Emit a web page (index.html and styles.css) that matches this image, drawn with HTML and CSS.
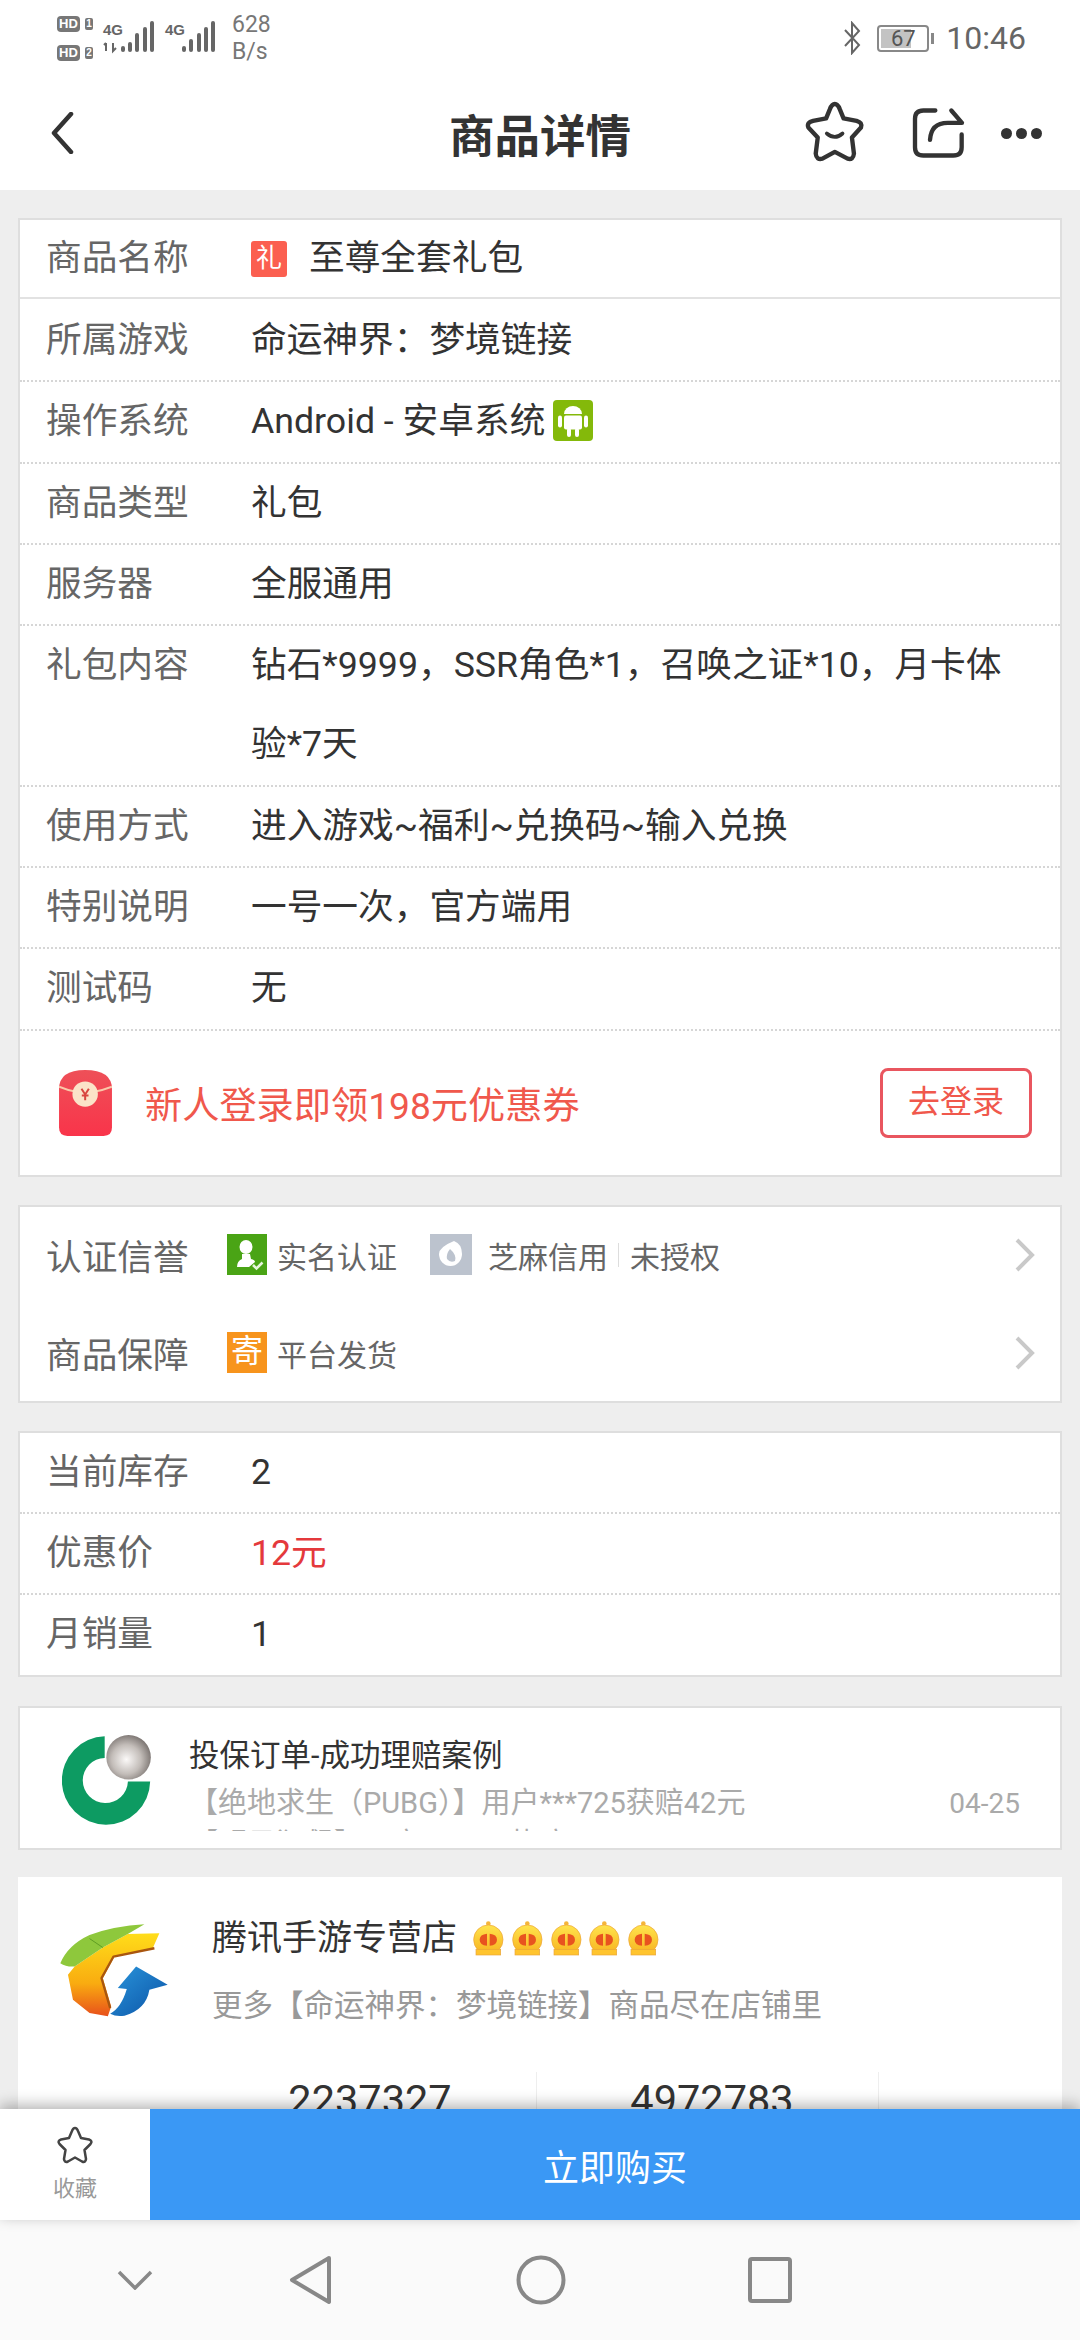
FILE: index.html
```html
<!DOCTYPE html>
<html lang="zh">
<head>
<meta charset="utf-8">
<title>商品详情</title>
<link rel="stylesheet" href="styles.css">
</head>
<body>
<div class="phone">
  <header class="statusbar">
    <div class="status-left">
      <div class="hd-col">
        <div class="hd-line"><span class="hd">HD</span><span class="sim">1</span></div>
        <div class="hd-line"><span class="hd">HD</span><span class="sim">2</span></div>
      </div>
      <svg class="signal" width="118" height="36" viewBox="100 18 118 36">
        <text x="103" y="35" class="s4g">4G</text>
        <path d="M106 43v8M104 45l2-2M113 43v8l3-3" fill="none" stroke="#666" stroke-width="2"/>
        <rect x="121" y="46" width="4" height="6" rx="2" fill="#666"/>
        <rect x="128" y="42" width="4" height="10" rx="2" fill="#666"/>
        <rect x="135" y="33" width="4" height="19" rx="2" fill="#666"/>
        <rect x="143" y="27" width="4" height="25" rx="2" fill="#666"/>
        <rect x="150" y="21" width="4" height="31" rx="2" fill="#666"/>
        <text x="165" y="35" class="s4g">4G</text>
        <rect x="182" y="46" width="4" height="6" rx="2" fill="#666"/>
        <rect x="189" y="39" width="4" height="13" rx="2" fill="#666"/>
        <rect x="197" y="33" width="4" height="19" rx="2" fill="#666"/>
        <rect x="204" y="27" width="4" height="25" rx="2" fill="#666"/>
        <rect x="211" y="21" width="4" height="31" rx="2" fill="#666"/>
      </svg>
      <div class="speed"><span>628</span><span>B/s</span></div>
    </div>
    <div class="status-right">
      <svg width="18" height="34" viewBox="0 0 18 34"><path d="M2 9l14 15-7 8V2l7 8L2 25" fill="none" stroke="#666" stroke-width="2"/></svg>
      <div class="battery"><div class="battery-box"><span class="battery-fill"></span><span class="battery-num">67</span></div><span class="battery-cap"></span></div>
      <span class="clock">10:46</span>
    </div>
  </header>

  <nav class="navbar">
    <svg class="back" width="24" height="42" viewBox="0 0 24 42"><path d="M21 2L4 21l17 19" fill="none" stroke="#333" stroke-width="4.5" stroke-linecap="round" stroke-linejoin="round"/></svg>
    <h1 class="title">商品详情</h1>
    <div class="nav-actions">
      <svg class="nav-star" width="62" height="62" viewBox="75 30 185 185"><path d="M167 42Q176 42 182 58L193 85 232 92Q250 97 245 112L218 142 224 190Q222 210 205 205L167 185 130 205Q112 210 110 190L116 142 88 112Q82 97 102 92L141 85 152 58Q158 42 167 42z" fill="none" stroke="#333" stroke-width="13" stroke-linejoin="round"/><path d="M143 130Q167 150 190 130" fill="none" stroke="#333" stroke-width="11" stroke-linecap="round"/></svg>
      <svg class="nav-share" width="55" height="52" viewBox="395 50 165 155"><path d="M468 60H432Q407 60 407 85V170Q407 195 432 195H522Q547 195 547 170V132" fill="none" stroke="#333" stroke-width="13" stroke-linecap="round"/><path d="M452 148Q455 97 505 97H548L516 60" fill="none" stroke="#333" stroke-width="13" stroke-linecap="round" stroke-linejoin="round"/></svg>
      <div class="dots"><i></i><i></i><i></i></div>
    </div>
  </nav>

  <main class="content">
    <section class="card">
      <div class="row row-solid"><span class="label">商品名称</span><span class="value"><span class="gift">礼</span>至尊全套礼包</span></div>
      <div class="row row-second"><span class="label">所属游戏</span><span class="value">命运神界：梦境链接</span></div>
      <div class="row"><span class="label">操作系统</span><span class="value">Android - 安卓系统<svg class="android" width="40" height="41" viewBox="0 0 40 41"><rect width="40" height="41" rx="4" fill="#84b90a"/><path d="M11 14a9 8 0 0 1 18 0z" fill="#fff"/><rect x="11" y="15.500" width="18" height="14" rx="2" fill="#fff"/><rect x="5" y="15.500" width="4" height="12" rx="2" fill="#fff"/><rect x="31" y="15.500" width="4" height="12" rx="2" fill="#fff"/><rect x="14" y="28" width="4" height="9" rx="2" fill="#fff"/><rect x="22" y="28" width="4" height="9" rx="2" fill="#fff"/></svg></span></div>
      <div class="row"><span class="label">商品类型</span><span class="value">礼包</span></div>
      <div class="row"><span class="label">服务器</span><span class="value">全服通用</span></div>
      <div class="row"><span class="label">礼包内容</span><span class="value">钻石*9999，SSR角色*1，召唤之证*10，月卡体验*7天</span></div>
      <div class="row"><span class="label">使用方式</span><span class="value">进入游戏~福利~兑换码~输入兑换</span></div>
      <div class="row"><span class="label">特别说明</span><span class="value">一号一次，官方端用</span></div>
      <div class="row"><span class="label">测试码</span><span class="value">无</span></div>
      <div class="promo">
        <svg width="53" height="66" viewBox="57 28 158 197"><defs><linearGradient id="rp" x1="0" y1="0" x2="0" y2="1"><stop offset="0" stop-color="#ee5058"/><stop offset="1" stop-color="#f9344a"/></linearGradient></defs><path d="M57 85Q57 28 135 28 215 28 215 85V200Q215 225 190 225H82Q57 225 57 200z" fill="url(#rp)"/><path d="M57 78Q80 88 105 92M165 92Q190 88 215 78" fill="none" stroke="#f9c9a9" stroke-width="6"/><circle cx="135" cy="100" r="38" fill="#fbe3c8"/><path d="M124 84l11 17 11-17M135 101v17M125 104h20" fill="none" stroke="#d9463f" stroke-width="6"/></svg>
        <span class="promo-text">新人登录即领198元优惠券</span>
        <a class="login">去登录</a>
      </div>
    </section>

    <section class="card guarantee">
      <div class="g-row">
        <span class="label">认证信誉</span>
        <span class="badge green"><svg width="40" height="41" viewBox="0 0 40 41"><ellipse cx="19" cy="13" rx="6.500" ry="7" fill="#fff"/><path d="M15 20H23L24 25Q28 26 28 28L22 33H10Q10 27 15 25z" fill="#fff"/><path d="M26 31l3.500 3.500 6-6" fill="none" stroke="#e6f5dc" stroke-width="2.500"/></svg></span>
        <span class="g-text">实名认证</span>
        <span class="badge gray"><svg width="42" height="41" viewBox="0 0 42 41"><path d="M24 7Q32 10 32 20A11.500 12 0 0 1 9 20Q9 13 24 7z" fill="#fff"/><path d="M20 15Q27 21 25 27 20 29 17 25 16 20 20 15z" fill="#bcc3ce"/></svg></span>
        <span class="g-text">芝麻信用</span><span class="sep"></span><span class="g-text">未授权</span>
        <svg class="chev" width="22" height="34" viewBox="0 0 22 34"><path d="M3 2l15 15L3 32" fill="none" stroke="#c9c9c9" stroke-width="4"/></svg>
      </div>
      <div class="g-row">
        <span class="label">商品保障</span>
        <span class="badge orange">寄</span>
        <span class="g-text">平台发货</span>
        <svg class="chev" width="22" height="34" viewBox="0 0 22 34"><path d="M3 2l15 15L3 32" fill="none" stroke="#c9c9c9" stroke-width="4"/></svg>
      </div>
    </section>

    <section class="card">
      <div class="row"><span class="label">当前库存</span><span class="value">2</span></div>
      <div class="row"><span class="label">优惠价</span><span class="value price">12元</span></div>
      <div class="row row-last"><span class="label">月销量</span><span class="value">1</span></div>
    </section>

    <section class="card claim">
      <svg class="claim-logo" width="90" height="93" viewBox="70 40 270 280"><defs><radialGradient id="ball" cx=".45" cy=".55" r=".6"><stop offset="0" stop-color="#fbf9f8"/><stop offset=".55" stop-color="#c3bdb9"/><stop offset="1" stop-color="#736c69"/></radialGradient></defs><path d="M198 47A133 133 0 1 0 335 183H268A68 68 0 1 1 198 112Z" fill="#0d9b62"/><circle cx="270" cy="110" r="67" fill="url(#ball)"/></svg>
      <div class="claim-body">
        <div class="claim-title">投保订单-成功理赔案例</div>
        <div class="claim-ticker">
          <div class="claim-item"><span>【绝地求生（PUBG）】用户***725获赔42元</span><span class="claim-date">04-25</span></div>
          <div class="claim-item"><span>【明日狂飙】用户***836获赔18元</span><span class="claim-date">04-24</span></div>
        </div>
      </div>
    </section>

    <section class="shop">
      <div class="shop-head">
        <svg class="shop-logo" width="113" height="97" viewBox="55 40 340 290"><defs><linearGradient id="g1" x1="0" y1="0" x2="0" y2="1"><stop offset="0" stop-color="#ffdd1a"/><stop offset=".6" stop-color="#f9ac10"/><stop offset="1" stop-color="#e8501b"/></linearGradient><linearGradient id="g2" x1="0" y1="0" x2="1" y2="1"><stop offset="0" stop-color="#2a96dc"/><stop offset="1" stop-color="#0b52a5"/></linearGradient></defs><path d="M190 113L265 72 360 70 340 115 225 140 190 205 215 290 205 320 150 310 100 270 85 195 105 170z" fill="url(#g1)"/><path d="M345 115L222 140 186 205 212 295" fill="none" stroke="#a9560f" stroke-width="7" stroke-linejoin="round"/><path d="M62 160Q85 105 150 75 225 48 315 43L265 72 190 113 105 170Q80 172 62 160z" fill="#8ec83c"/><path d="M150 86L190 113" stroke="#5e9e22" stroke-width="3"/><path d="M290 170L385 225 330 240Q320 300 255 318 230 322 212 312 245 295 262 238L235 235z" fill="url(#g2)"/></svg>
        <div class="shop-info">
          <div class="shop-name">腾讯手游专营店
            <span class="crowns">
              <svg width="31" height="35" viewBox="0 0 93 105"><use href="#crown"/></svg>
              <svg width="31" height="35" viewBox="0 0 93 105"><use href="#crown"/></svg>
              <svg width="31" height="35" viewBox="0 0 93 105"><use href="#crown"/></svg>
              <svg width="31" height="35" viewBox="0 0 93 105"><use href="#crown"/></svg>
              <svg width="31" height="35" viewBox="0 0 93 105"><use href="#crown"/></svg>
            </span>
          </div>
          <div class="shop-sub">更多【命运神界：梦境链接】商品尽在店铺里</div>
        </div>
      </div>
      <div class="stats">
        <div class="stat">2237327</div>
        <div class="stat">4972783</div>
      </div>
    </section>
  </main>

  <div class="buybar">
    <div class="fav">
      <svg width="38" height="38" viewBox="0 0 38 38"><path d="M19 2Q21 2 22 5L25 12 33 13.500Q37 15 34.500 18L28.500 24 30 33Q29.500 37 26 35.500L19 31.500 12 35.500Q8.500 37 8 33L9.500 24 3.500 18Q1 15 5 13.500L13 12 16 5Q17 2 19 2z" fill="none" stroke="#444" stroke-width="2.500" stroke-linejoin="round"/></svg>
      <span>收藏</span>
    </div>
    <div class="buy">立即购买</div>
  </div>

  <footer class="sysnav">
    <svg class="sys-down" width="36" height="20" viewBox="0 0 36 20"><path d="M2 2l16 16L34 2" fill="none" stroke="#888" stroke-width="3.500"/></svg>
    <svg class="sys-back" width="44" height="50" viewBox="0 0 44 50"><path d="M40 3L3 25l37 22z" fill="none" stroke="#888" stroke-width="4" stroke-linejoin="round"/></svg>
    <svg class="sys-home" width="50" height="50" viewBox="0 0 50 50"><circle cx="25" cy="25" r="22.500" fill="none" stroke="#888" stroke-width="4"/></svg>
    <svg class="sys-recent" width="44" height="46" viewBox="0 0 44 46"><rect x="2" y="2" width="40" height="42" rx="2" fill="none" stroke="#888" stroke-width="4"/></svg>
  </footer>

  <svg class="defs" width="0" height="0"><defs>
    <linearGradient id="cg" x1="0" y1="0" x2="0" y2="1"><stop offset="0" stop-color="#ffe44d"/><stop offset="1" stop-color="#f7b21f"/></linearGradient>
    <g id="crown"><circle cx="46" cy="8" r="7" fill="#f5b53a"/><circle cx="46" cy="56" r="44" fill="url(#cg)" stroke="#eda33a" stroke-width="2"/><path d="M42 38Q20 40 20 56 20 72 42 74z" fill="#e8531f"/><path d="M50 38Q72 40 72 56 72 72 50 74z" fill="#e8531f"/><rect x="9" y="85" width="74" height="17" fill="#ffc42e" stroke="#e9a43a" stroke-width="2"/></g>
  </defs></svg>
</div>
</body>
</html>
```
FILE: styles.css
```css
* { box-sizing: border-box; margin: 0; padding: 0; }
html, body { width: 1080px; height: 2340px; overflow: hidden; }
body { font-family: Roboto, "Noto Sans CJK SC", sans-serif; color: #333; background: #eee; }
.phone { width: 1080px; height: 2340px; display: flex; flex-direction: column; position: relative; }

.statusbar { height: 76px; background: #fff; display: flex; justify-content: space-between; align-items: center; padding: 0 54px 0 57px; color: #666; flex: none; }
.status-left { display: flex; align-items: center; }
.hd-col { display: flex; flex-direction: column; gap: 13px; width: 43px; }
.hd-line { display: flex; align-items: center; gap: 5px; height: 16px; }
.hd { width: 23px; height: 16px; background: #777; color: #fff; border-radius: 4px; font: bold 13px/16px "Liberation Sans", sans-serif; text-align: center; flex: none; }
.sim { width: 8px; height: 12px; background: #777; color: #fff; border-radius: 2px; font: bold 10px/12px "Liberation Sans", sans-serif; text-align: center; flex: none; }
.signal { margin-top: -4px; }
.s4g { font: bold 15px "Liberation Sans", sans-serif; fill: #666; }
.speed { display: flex; flex-direction: column; align-items: flex-start; font: 23px/27px Roboto, sans-serif; margin-left: 14px; color: #777; }
.status-right { display: flex; align-items: center; gap: 16px; }
.battery { display: flex; align-items: center; gap: 2px; }
.battery-box { width: 52px; height: 27px; border: 2px solid #888; border-radius: 4px; position: relative; padding: 2px; }
.battery-fill { display: block; width: 67%; height: 100%; background: #c3c3c3; }
.battery-num { position: absolute; inset: 0; text-align: center; font: 22px/23px Roboto, sans-serif; color: #555; }
.battery-cap { width: 3px; height: 11px; background: #888; }
.clock { font: 32px/1 Roboto, sans-serif; color: #666; margin-left: -4px; }

.navbar { height: 114px; background: #fff; display: flex; align-items: center; padding: 0 38px 0 50px; position: relative; flex: none; }
.title { position: absolute; left: 0; right: 0; text-align: center; font-size: 45.500px; font-weight: 700; color: #333; }
.nav-actions { margin-left: auto; display: flex; align-items: center; position: relative; }
.nav-star { margin-top: -4px; }
.nav-share { margin-left: 45px; }
.dots { display: flex; gap: 4px; margin-left: 35px; }
.dots i { width: 11px; height: 11px; border-radius: 50%; background: #333; display: block; }

.content { flex: 1; overflow: hidden; padding: 28px 18px 0; min-height: 0; display: flex; flex-direction: column; gap: 28px; }
.card { background: #fff; border: 2px solid #dedede; flex: none; }

.row { display: flex; padding: 0 26px; align-items: flex-start; border-bottom: 2px dotted #d6d6d6; font-size: 35.700px; line-height: 79.300px; }
.row-solid { border-bottom: 2px solid #e2e2e2; line-height: 77px; }
.row-second { padding-top: 2px; }
.row-last { border-bottom: none; }
.label { width: 205px; flex: none; color: #666; }
.value { color: #333; flex: 1; padding-right: 20px; }
.gift { display: inline-block; width: 36px; height: 36px; margin: 0 22px 0 0; background: #fb5f50; color: #fff; border-radius: 3px; font-size: 26px; line-height: 34px; text-align: center; vertical-align: 3px; }
.android { margin-left: 8px; vertical-align: -8px; }
.price { color: #e4393c; }

.promo { height: 144px; display: flex; align-items: center; padding: 0 28px 0 39px; }
.promo-text { font-size: 37.200px; color: #f0584c; margin-left: 33px; }
.login { margin-left: auto; width: 152px; height: 70px; border: 3px solid #e9565f; border-radius: 8px; color: #f0584c; font-size: 32px; line-height: 62px; text-align: center; }

.guarantee { height: 198px; display: flex; flex-direction: column; justify-content: center; gap: 8px; }
.g-row { display: flex; align-items: center; height: 90px; padding: 0 24px 0 26px; font-size: 35.700px; }
.g-row .label { width: 181px; }
.badge { width: 40px; height: 41px; flex: none; display: block; color: #fff; font-size: 32px; line-height: 38px; text-align: center; margin-right: 10px; }
.green { background: #4aa415; }
.gray { background: #bcc3ce; width: 42px; margin-left: 33px; margin-right: 16px; }
.orange { background: #f7941d; }
.g-text { font-size: 30px; color: #666; }
.sep { width: 1px; height: 24px; background: #ddd; margin: 0 11px 0 10px; }
.chev { margin-left: auto; }

.claim { height: 144px; display: flex; padding: 27px 0 0 42px; margin-top: 1px; overflow: hidden; }
.claim-logo { flex: none; margin-top: -1px; }
.claim-body { margin-left: 37px; flex: 1; }
.claim-title { font-size: 30.500px; line-height: 44px; color: #333; margin-top: -1px; }
.claim-ticker { height: 48px; overflow: hidden; margin-top: 5px; padding-right: 40px; }
.claim-item { display: flex; justify-content: space-between; font-size: 29px; line-height: 41px; color: #aaa; height: 41px; }
.claim-date { font-size: 28px; }

.shop { background: #fff; flex: none; padding: 46px 0 0 40px; height: 300px; margin-top: -1px; }
.shop-head { display: flex; height: 97px; }
.shop-logo { flex: none; }
.shop-info { margin-left: 41px; margin-top: -9px; }
.shop-name { font-size: 35px; color: #333; display: flex; align-items: center; line-height: 50px; gap: 16px; }
.crowns { display: flex; gap: 7.800px; }
.shop-sub { font-size: 30.500px; color: #999; margin-top: 20px; line-height: 44px; }
.stats { display: flex; margin-left: 137px; margin-top: 52px; }
.stat { width: 342px; height: 90px; font-size: 41.500px; line-height: 50px; text-align: center; border-right: 1px solid #eee; padding: 3px 0 0 9px; }

.buybar { height: 111px; display: flex; flex: none; background: #fff; box-shadow: 0 -4px 14px rgba(0,0,0,.3); position: relative; }
.fav { width: 150px; display: flex; flex-direction: column; align-items: center; padding-top: 17px; color: #999; font-size: 22px; line-height: 34px; gap: 8px; }
.buy { flex: 1; background: #3a98f5; color: #fff; font-size: 36px; display: flex; align-items: center; justify-content: center; }

.sysnav { height: 120px; background: #fafafa; flex: none; display: flex; align-items: center; padding-left: 117px; }
.sys-back { margin-left: 136px; }
.sys-home { margin-left: 183px; }
.sys-recent { margin-left: 182px; }
.defs { position: absolute; }
```
